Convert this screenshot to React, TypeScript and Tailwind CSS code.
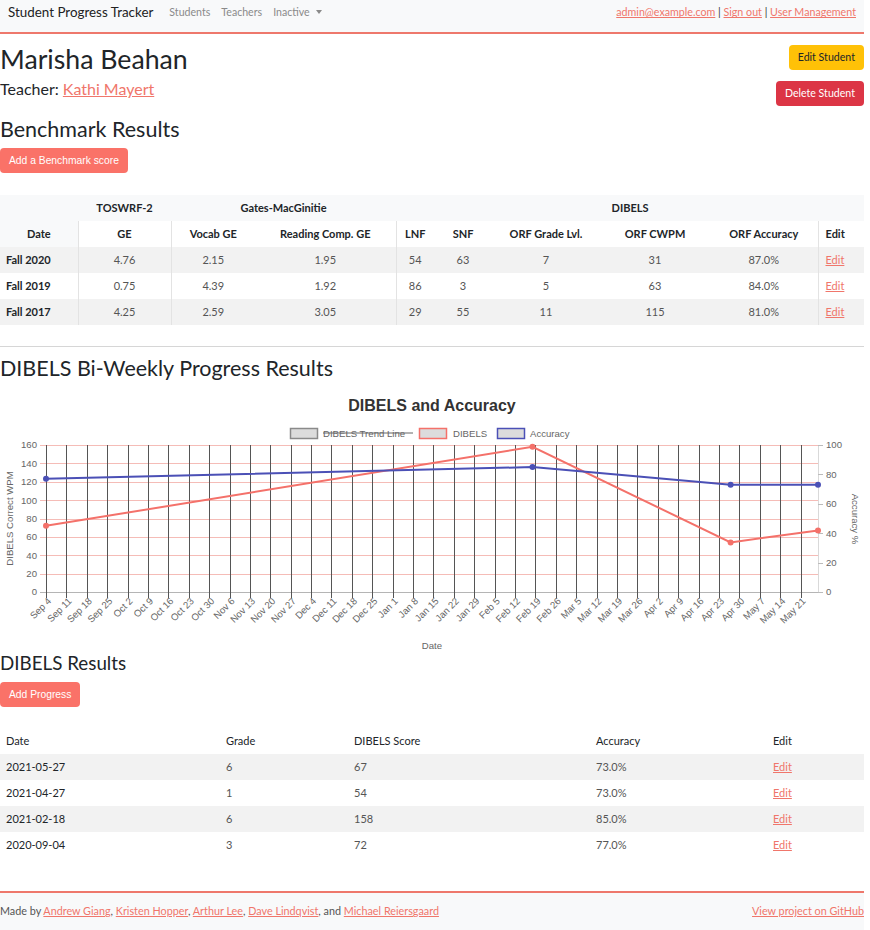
import type { FC } from 'react';

const LINK = 'text-[#f0766b] underline';

const MONTHS = ['Jan', 'Feb', 'Mar', 'Apr', 'May', 'Jun', 'Jul', 'Aug', 'Sep', 'Oct', 'Nov', 'Dec'];
const START = Date.UTC(2020, 8, 4);
const DAY = 86400000;

// chart geometry (svg coords)
const PL = 46;
const PR = 818;
const PT = 64;
const PB = 211;
const PX_PER_DAY = (PR - PL) / 265;

const xOf = (iso: string) => {
  const [y, m, d] = iso.split('-').map(Number);
  return PL + ((Date.UTC(y, m - 1, d) - START) / DAY) * PX_PER_DAY;
};
const yLeft = (v: number) => PB - (v / 160) * (PB - PT);
const yRight = (v: number) => PB - (v / 100) * (PB - PT);

const progress = [
  { date: '2021-05-27', grade: 6, score: 67, acc: 73 },
  { date: '2021-04-27', grade: 1, score: 54, acc: 73 },
  { date: '2021-02-18', grade: 6, score: 158, acc: 85 },
  { date: '2020-09-04', grade: 3, score: 72, acc: 77 },
];

const benchmarks = [
  ['Fall 2020', '4.76', '2.15', '1.95', '54', '63', '7', '31', '87.0%'],
  ['Fall 2019', '0.75', '4.39', '1.92', '86', '3', '5', '63', '84.0%'],
  ['Fall 2017', '4.25', '2.59', '3.05', '29', '55', '11', '115', '81.0%'],
];

const ticks = Array.from({ length: 38 }, (_, k) => {
  const d = new Date(START + k * 7 * DAY);
  return { x: PL + k * 7 * PX_PER_DAY, label: `${MONTHS[d.getUTCMonth()]} ${d.getUTCDate()}` };
});

const Chart: FC = () => {
  const pts = [...progress].reverse();
  const red = '#f4716a';
  const blue = '#4b50b6';
  const font = "'Liberation Sans', Arial, sans-serif";

  return (
    <svg width={864} height={270} className="block" style={{ fontFamily: font }}>
      <text x={432} y={29.5} textAnchor="middle" fontSize={16} fontWeight="bold" fill="#333">
        DIBELS and Accuracy
      </text>

      {/* legend */}
      <rect x={290.5} y={47.5} width={27} height={10} fill="#dcdcdc" stroke="#8a8a8a" strokeWidth={1.5} />
      <text x={323} y={55.5} fontSize={9.6} fill="#666">DIBELS Trend Line</text>
      <line x1={323} y1={52} x2={413} y2={52} stroke="#666" strokeWidth={1} />
      <rect x={419.5} y={47.5} width={27} height={10} fill="#dcdcdc" stroke={red} strokeWidth={1.5} />
      <text x={453} y={55.5} fontSize={9.6} fill="#666">DIBELS</text>
      <rect x={497.5} y={47.5} width={27} height={10} fill="#dcdcdc" stroke={blue} strokeWidth={1.5} />
      <text x={530} y={55.5} fontSize={9.6} fill="#666">Accuracy</text>

      {/* horizontal grid */}
      {[0, 20, 40, 60, 80, 100, 120, 140, 160].map(v => (
        <g key={v}>
          <line
            x1={40}
            x2={PR}
            y1={Math.round(yLeft(v)) + 0.5}
            y2={Math.round(yLeft(v)) + 0.5}
            stroke={v === 0 ? '#b5b5b5' : '#f5bcb7'}
            strokeWidth={1}
          />
          <text x={37} y={yLeft(v) + 3.4} textAnchor="end" fontSize={9.6} fill="#666">
            {v}
          </text>
        </g>
      ))}

      {/* vertical grid + x labels */}
      {ticks.map(t => (
        <g key={t.label}>
          <line
            x1={Math.round(t.x) + 0.5}
            x2={Math.round(t.x) + 0.5}
            y1={PT}
            y2={PB + 6}
            stroke="#555"
            strokeWidth={1}
          />
          <text
            transform={`translate(${t.x + 4}, ${PB + 8}) rotate(-45)`}
            textAnchor="end"
            dominantBaseline="middle"
            fontSize={9.6}
            fill="#666"
          >
            {t.label}
          </text>
        </g>
      ))}

      {/* right axis */}
      <line x1={PR + 0.5} x2={PR + 0.5} y1={PT} y2={PB} stroke="#d9d9d9" strokeWidth={1} />
      {[0, 20, 40, 60, 80, 100].map(v => (
        <g key={v}>
          <line
            x1={PR}
            x2={PR + 5}
            y1={Math.round(yRight(v)) + 0.5}
            y2={Math.round(yRight(v)) + 0.5}
            stroke="#bbb"
            strokeWidth={1}
          />
          <text x={826} y={yRight(v) + 3.4} fontSize={9.6} fill="#666">
            {v}
          </text>
        </g>
      ))}

      {/* axis titles */}
      <text transform="translate(12.5, 137.5) rotate(-90)" textAnchor="middle" fontSize={9.6} fill="#666">
        DIBELS Correct WPM
      </text>
      <text transform="translate(852, 138) rotate(90)" textAnchor="middle" fontSize={9.6} fill="#666">
        Accuracy %
      </text>
      <text x={432} y={268} textAnchor="middle" fontSize={9.6} fill="#666">
        Date
      </text>

      {/* data */}
      <polyline
        points={pts.map(p => `${xOf(p.date)},${yLeft(p.score)}`).join(' ')}
        fill="none"
        stroke={red}
        strokeWidth={2}
      />
      <polyline
        points={pts.map(p => `${xOf(p.date)},${yRight(p.acc)}`).join(' ')}
        fill="none"
        stroke={blue}
        strokeWidth={2}
      />
      {pts.map(p => (
        <g key={p.date}>
          <circle cx={xOf(p.date)} cy={yLeft(p.score)} r={3} fill={red} />
          <circle cx={xOf(p.date)} cy={yRight(p.acc)} r={3} fill={blue} />
        </g>
      ))}
    </svg>
  );
};

const App: FC = () => {
  return (
    <div className="w-[864px] font-['Lato','Liberation_Sans',sans-serif] text-[#212529] bg-white">
      <nav className="h-[34px] bg-[#f8f9fa] border-b-2 border-[#ee786c] flex items-center justify-between px-2 pb-[7px]">
        <div className="flex items-center">
          <span className="text-[13.4px] text-[#222]">Student Progress Tracker</span>
          <div className="flex items-center gap-[11px] ml-4 text-[10.6px] text-[#8a8a8a]">
            <span>Students</span>
            <span>Teachers</span>
            <span className="flex items-center gap-[6px]">
              Inactive
              <svg width="6" height="4" viewBox="0 0 6 4">
                <path d="M0 0 L6 0 L3 4 Z" fill="#8a8a8a" />
              </svg>
            </span>
          </div>
        </div>
        <div className="text-[10.7px] text-[#333]">
          <a className={LINK}>admin@example.com</a> | <a className={LINK}>Sign out</a> |{' '}
          <a className={LINK}>User Management</a>
        </div>
      </nav>

      <section className="flex justify-between pt-2">
        <div>
          <h1 className="text-[26.7px] leading-[35px]">Marisha Beahan</h1>
          <p className="text-[16px] leading-[24px]">
            Teacher: <a className={LINK}>Kathi Mayert</a>
          </p>
        </div>
        <div className="flex flex-col items-end gap-[11px] mt-[3px]">
          <button className="h-[25px] px-[9px] rounded-[4px] bg-[#ffc107] text-[10.6px] text-[#212529]">
            Edit Student
          </button>
          <button className="h-[25px] px-[9px] rounded-[4px] bg-[#dc3545] text-[10.6px] text-white">
            Delete Student
          </button>
        </div>
      </section>

      <h2 className="text-[21.5px] leading-[26px] mt-[10px]">Benchmark Results</h2>
      <button className="mt-[6px] h-[25px] px-[9px] rounded-[4px] bg-[#fa7268] text-white text-[10.3px] font-['Liberation_Sans',Arial,sans-serif]">
        Add a Benchmark score
      </button>

      <table className="mt-[22px] w-[864px] table-fixed border-collapse text-[11px]">
        <colgroup>
          <col className="w-[78px]" />
          <col className="w-[93px]" />
          <col className="w-[84px]" />
          <col className="w-[141px]" />
          <col className="w-[38px]" />
          <col className="w-[58px]" />
          <col className="w-[108px]" />
          <col className="w-[110px]" />
          <col className="w-[108px]" />
          <col className="w-[46px]" />
        </colgroup>
        <thead>
          <tr className="h-[26px] bg-[#f8f9fa] font-bold">
            <th />
            <th className="text-center">TOSWRF-2</th>
            <th colSpan={2} className="text-center">Gates-MacGinitie</th>
            <th colSpan={6} className="text-center">DIBELS</th>
          </tr>
          <tr className="h-[26px] font-bold">
            <th className="bg-[#f8f9fa] text-center border-r border-[#e3e3e3]">Date</th>
            <th className="text-center border-r border-[#e3e3e3]">GE</th>
            <th className="text-center">Vocab GE</th>
            <th className="text-center border-r border-[#e3e3e3]">Reading Comp. GE</th>
            <th className="text-center">LNF</th>
            <th className="text-center">SNF</th>
            <th className="text-center">ORF Grade Lvl.</th>
            <th className="text-center">ORF CWPM</th>
            <th className="text-center border-r border-[#e3e3e3]">ORF Accuracy</th>
            <th className="text-left pl-[7px]">Edit</th>
          </tr>
        </thead>
        <tbody>
          {benchmarks.map((row, i) => (
            <tr key={row[0]} className={`h-[26px] ${i % 2 === 0 ? 'bg-[#f2f2f2]' : 'bg-white'}`}>
              <th className="text-left pl-[6px] font-bold border-r border-[#e3e3e3]">{row[0]}</th>
              {row.slice(1).map((cell, j) => (
                <td
                  key={j}
                  className={`text-center text-[#555] ${j === 0 || j === 2 || j === 7 ? 'border-r border-[#e3e3e3]' : ''}`}
                >
                  {cell}
                </td>
              ))}
              <td className="pl-[7px]">
                <a className={LINK}>Edit</a>
              </td>
            </tr>
          ))}
        </tbody>
      </table>

      <hr className="mt-[21px] border-t border-[#d6d6d6]" />

      <h2 className="text-[21.5px] leading-[26px] mt-[8px]">DIBELS Bi-Weekly Progress Results</h2>
      <Chart />

      <h3 className="text-[18.8px] leading-[24px]">DIBELS Results</h3>
      <button className="mt-[7px] h-[25px] px-[9px] rounded-[4px] bg-[#fa7268] text-white text-[10.3px] font-['Liberation_Sans',Arial,sans-serif]">
        Add Progress
      </button>

      <table className="mt-[21px] w-[864px] table-fixed border-collapse text-[11px]">
        <colgroup>
          <col className="w-[220px]" />
          <col className="w-[128px]" />
          <col className="w-[242px]" />
          <col className="w-[177px]" />
          <col className="w-[97px]" />
        </colgroup>
        <thead>
          <tr className="h-[26px] text-left">
            <th className="pl-[6px] font-normal">Date</th>
            <th className="pl-[6px] font-normal">Grade</th>
            <th className="pl-[6px] font-normal">DIBELS Score</th>
            <th className="pl-[6px] font-normal">Accuracy</th>
            <th className="pl-[6px] font-normal">Edit</th>
          </tr>
        </thead>
        <tbody>
          {progress.map((p, i) => (
            <tr key={p.date} className={`h-[26px] ${i % 2 === 0 ? 'bg-[#f2f2f2]' : 'bg-white'}`}>
              <td className="pl-[6px]">{p.date}</td>
              <td className="pl-[6px] text-[#555]">{p.grade}</td>
              <td className="pl-[6px] text-[#555]">{p.score}</td>
              <td className="pl-[6px] text-[#555]">{p.acc.toFixed(1)}%</td>
              <td className="pl-[6px]">
                <a className={LINK}>Edit</a>
              </td>
            </tr>
          ))}
        </tbody>
      </table>

      <footer className="mt-[33px] border-t-2 border-[#ee786c] bg-[#f8f9fa] h-[40px] flex items-center justify-between pb-[2px] text-[10.8px] text-[#555]">
        <span>
          Made by <a className={LINK}>Andrew Giang</a>, <a className={LINK}>Kristen Hopper</a>,{' '}
          <a className={LINK}>Arthur Lee</a>, <a className={LINK}>Dave Lindqvist</a>, and{' '}
          <a className={LINK}>Michael Reiersgaard</a>
        </span>
        <a className={LINK}>View project on GitHub</a>
      </footer>
    </div>
  );
};

export default App;
